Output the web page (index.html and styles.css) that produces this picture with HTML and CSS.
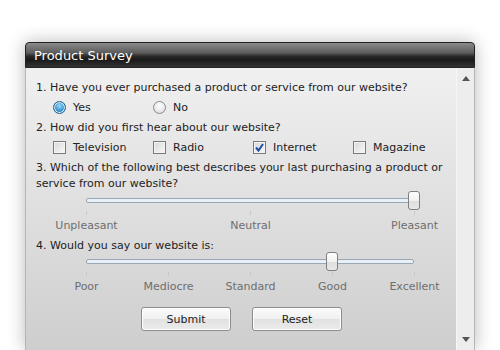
FILE: index.html
```html
<!DOCTYPE html>
<html lang="en">
<head>
    <meta charset="UTF-8">
    <title>Product Survey</title>
    <link rel="stylesheet" href="styles.css">
</head>
<body>
    <div class="window">
        <div class="titlebar">Product Survey</div>
        <div class="window-body">
            <div class="content">
                <!-- Question 1 -->
                <p class="question">1. Have you ever purchased a product or service from our website?</p>
                <div class="choices">
                    <label class="choice"><span class="radio checked"></span>Yes</label>
                    <label class="choice"><span class="radio"></span>No</label>
                </div>

                <!-- Question 2 -->
                <p class="question q2">2. How did you first hear about our website?</p>
                <div class="choices">
                    <label class="choice"><span class="check"></span>Television</label>
                    <label class="choice"><span class="check"></span>Radio</label>
                    <label class="choice"><span class="check checked">
                        <svg viewBox="0 0 13 13" width="13" height="13"><path d="M3 6.5 L5.5 9.5 L10 3" fill="none" stroke="#1d4fa8" stroke-width="2"/></svg>
                    </span>Internet</label>
                    <label class="choice"><span class="check"></span>Magazine</label>
                </div>

                <!-- Question 3 -->
                <p class="question q3">3. Which of the following best describes your last purchasing a product or service from our website?</p>
                <div class="slider s1">
                    <div class="track"></div>
                    <div class="thumb" style="left: 100%"></div>
                </div>
                <div class="ticks">
                    <span></span><span></span><span></span>
                </div>
                <div class="scale">
                    <span>Unpleasant</span><span>Neutral</span><span>Pleasant</span>
                </div>

                <!-- Question 4 -->
                <p class="question q4">4. Would you say our website is:</p>
                <div class="slider s2">
                    <div class="track"></div>
                    <div class="thumb" style="left: 75%"></div>
                </div>
                <div class="ticks">
                    <span></span><span></span><span></span><span></span><span></span>
                </div>
                <div class="scale">
                    <span>Poor</span><span>Mediocre</span><span>Standard</span><span>Good</span><span>Excellent</span>
                </div>

                <div class="buttons">
                    <button>Submit</button>
                    <button>Reset</button>
                </div>
            </div>
            <div class="scrollbar">
                <span class="arrow up"></span>
                <span class="arrow down"></span>
            </div>
        </div>
    </div>
</body>
</html>
```

FILE: styles.css
```css
* {
    margin: 0;
    padding: 0;
    box-sizing: border-box;
}

body {
    font-family: "DejaVu Sans", Verdana, sans-serif;
    font-size: 11px;
    color: #222;
    background: #fff;
    height: 350px;
    overflow: hidden;
}

.window {
    margin: 42px 0 0 25px;
    width: 450px;
    height: 308px;
    display: flex;
    flex-direction: column;
    border-radius: 4px 4px 0 0;
    box-shadow: 0 0 18px rgba(0, 0, 0, 0.28);
}

.titlebar {
    height: 26px;
    padding: 5px 0 0 8px;
    font-size: 13px;
    color: #fff;
    border: 1px solid #222;
    border-radius: 4px 4px 0 0;
    background: linear-gradient(#8a8a8a 0%, #5e5e5e 40%, #2a2a2a 55%, #1a1a1a 70%, #333 100%);
}

.window-body {
    flex: 1;
    display: flex;
    border-left: 1px solid #b5b5b5;
    border-right: 1px solid #b5b5b5;
    background: linear-gradient(#f0f0f0, #cecece);
}

.content {
    flex: 1;
    padding: 12px 0 0 10px;
}

.question {
    line-height: 16px;
}

.choices {
    display: flex;
    height: 20px;
    align-items: center;
    margin-top: 1px;
    padding-left: 17px;
}

.choice {
    width: 100px;
    display: flex;
    align-items: center;
    gap: 7px;
}

.radio {
    width: 13px;
    height: 13px;
    border-radius: 50%;
    border: 1px solid #8a8a8a;
    background: radial-gradient(circle at 50% 35%, #fff, #d8d8d8);
}

.radio.checked {
    border-color: #2a5f8a;
    background: radial-gradient(circle at 50% 35%, #9fd6f5, #2f8fcf 60%, #1e6aa3);
    box-shadow: inset 0 0 0 1px #d8eefa;
}

.check {
    width: 13px;
    height: 13px;
    border: 1px solid #7a7a7a;
    background: linear-gradient(135deg, #d6d6d6, #fafafa);
    box-shadow: inset 0 0 0 1px #f4f4f4;
    display: flex;
}

.check svg {
    margin: -1px;
}

.q2 {
    margin-top: 3px;
}

.q3 {
    margin-top: 3px;
    width: 420px;
}

.q4 {
    margin-top: 4px;
}

.slider {
    position: relative;
    margin: 0 0 0 50px;
    width: 328px;
    height: 19px;
}

.slider.s1 {
    margin-top: -1px;
}

.slider.s2 {
    margin-top: -2px;
}

.track {
    position: absolute;
    left: 0;
    right: 0;
    top: 7px;
    height: 5px;
    border: 1px solid #9aa6b4;
    border-radius: 2px;
    background: #e9eff6;
}

.thumb {
    position: absolute;
    top: 0;
    width: 12px;
    height: 19px;
    margin-left: -6px;
    border: 1px solid #7f7f7f;
    border-radius: 3px;
    background: linear-gradient(#fdfdfd, #f2f2f2 50%, #dedede 55%, #e8e8e8);
}

.ticks {
    display: flex;
    justify-content: space-between;
    margin-left: 50px;
    width: 329px;
    height: 5px;
    margin-top: 1px;
}

.ticks span {
    width: 1px;
    height: 4px;
    background: #c8c8c8;
}

.scale {
    display: flex;
    justify-content: space-between;
    margin-left: 50px;
    width: 329px;
    line-height: 16px;
    margin-top: 2px;
    color: #6e6e6e;
}

.scale span {
    width: 1px;
    display: flex;
    justify-content: center;
    white-space: nowrap;
}

.buttons {
    display: flex;
    gap: 21px;
    margin: 12px 0 0 105px;
}

button {
    width: 90px;
    height: 24px;
    font-family: "DejaVu Sans", Verdana, sans-serif;
    font-size: 11px;
    color: #222;
    border: 1px solid #8c8c8c;
    border-radius: 3px;
    background: linear-gradient(#fbfbfb, #f0f0f0 50%, #e2e2e2 52%, #ebebeb);
    box-shadow: inset 0 0 0 1px #fff;
}

.scrollbar {
    width: 18px;
    display: flex;
    flex-direction: column;
    justify-content: space-between;
    align-items: center;
    padding: 8px 0 8px;
    background: #ededed;
    border-left: 1px solid #f6f6f6;
}

.arrow {
    width: 0;
    height: 0;
    border-left: 4px solid transparent;
    border-right: 4px solid transparent;
}

.arrow.up {
    border-bottom: 5px solid #555;
}

.arrow.down {
    border-top: 5px solid #555;
}
```
